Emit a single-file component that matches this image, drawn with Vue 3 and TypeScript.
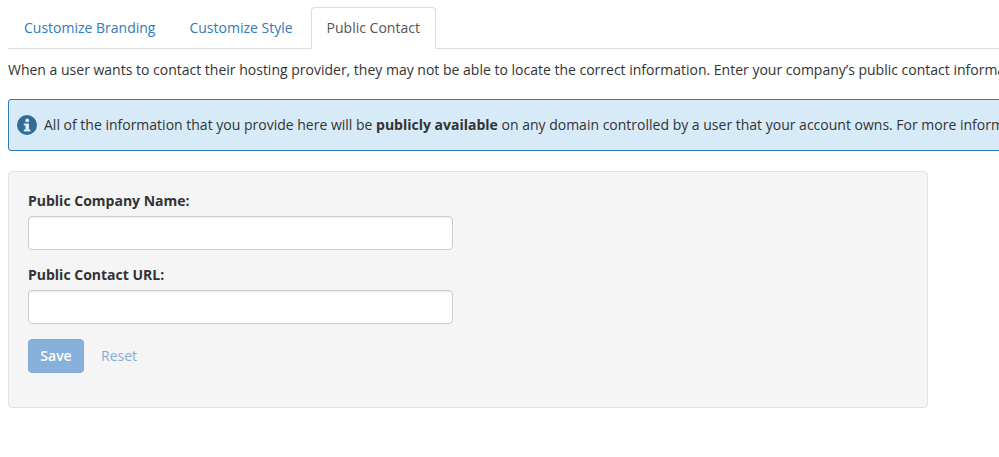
<script setup lang="ts">
import { ref } from 'vue'

interface Field {
    id: string;
    label: string;
}

const tabs = ['Customize Branding', 'Customize Style', 'Public Contact']
const activeTab = ref('Public Contact')

const fields: Field[] = [
    { id: 'company', label: 'Public Company Name:' },
    { id: 'url', label: 'Public Contact URL:' }
]
</script>

<template>
    <div class="page">
        <ul class="tabs">
            <li
                v-for="tab in tabs"
                :key="tab"
                class="tab"
                :class="{ active: tab === activeTab }"
            >
                <a href="#" @click.prevent="activeTab = tab">{{ tab }}</a>
            </li>
        </ul>

        <p class="intro">When a user wants to contact their hosting provider, they may not be able to locate the correct information. Enter your company’s public contact information here.</p>

        <div class="alert">
            <svg class="alert-icon" viewBox="0 0 20 20" aria-hidden="true">
                <circle cx="10" cy="10" r="10" fill="#336c94" />
                <circle cx="10.2" cy="5.4" r="1.9" fill="#d6eaf8" />
                <path d="M6.8 8.4h5.2v6h1.4v2H6.8v-2h1.6v-4H6.8z" fill="#d6eaf8" />
            </svg>
            <span>All of the information that you provide here will be <strong>publicly available</strong> on any domain controlled by a user that your account owns. For more information, read our documentation.</span>
        </div>

        <form class="well" @submit.prevent>
            <div v-for="field in fields" :key="field.id" class="form-group">
                <label :for="field.id">{{ field.label }}</label>
                <input :id="field.id" type="text">
            </div>
            <div class="actions">
                <button type="submit" class="save" disabled>Save</button>
                <a href="#" class="reset" @click.prevent>Reset</a>
            </div>
        </form>
    </div>
</template>

<style>
html, body {
    margin: 0;
    overflow: hidden;
    background: #fff;
}
</style>

<style scoped>
.page {
    width: 999px;
    height: 457px;
    overflow: hidden;
    padding: 7px 0 0 8px;
    box-sizing: border-box;

    color: #333;
    font-family: "Open Sans", sans-serif;
    font-size: 14px;
    line-height: 20px;
}

.tabs {
    display: flex;
    gap: 2px;
    margin: 0;
    padding: 0;
    list-style: none;
    border-bottom: 1px solid #ddd;
}

.tab {
    margin-bottom: -1px;
}

.tab a {
    display: block;
    padding: 10px 15px;
    border: 1px solid transparent;
    border-radius: 4px 4px 0 0;
    color: #337ab7;
    text-decoration: none;
}

.tab.active a {
    color: #555;
    background: #fff;
    border-color: #ddd;
    border-bottom-color: #fff;
}

.intro {
    width: 1400px;
    margin: 11px 0 0;
    white-space: nowrap;
}

.alert {
    display: flex;
    align-items: center;
    gap: 7px;
    width: 1400px;
    height: 52px;
    box-sizing: border-box;
    margin-top: 19px;
    padding: 0 8px;
    background: #d6eaf8;
    border: 1px solid #2a7cbc;
    border-radius: 3px;
    white-space: nowrap;
}

.alert-icon {
    width: 20px;
    height: 20px;
    flex-shrink: 0;
}

.well {
    width: 920px;
    height: 237px;
    box-sizing: border-box;
    margin-top: 20px;
    padding: 19px;
    background: #f5f5f5;
    border: 1px solid #e3e3e3;
    border-radius: 4px;
}

.form-group {
    margin-bottom: 15px;
}

.form-group label {
    display: block;
    margin-bottom: 5px;
    font-weight: 700;
}

.form-group input {
    display: block;
    width: 425px;
    height: 34px;
    box-sizing: border-box;
    padding: 6px 12px;
    background: #fff;
    border: 1px solid #ccc;
    border-radius: 4px;
    box-shadow: inset 0 1px 1px rgba(0, 0, 0, 0.075);
}

.actions {
    display: flex;
    align-items: center;
    gap: 17px;
}

.save {
    width: 56px;
    height: 34px;
    padding: 0;
    color: #fff;
    background: #87b1da;
    border: 1px solid #7fabd6;
    border-radius: 4px;
    font: 600 14px/20px "Open Sans", sans-serif;
}

.reset {
    color: #84add5;
    text-decoration: none;
}
</style>
